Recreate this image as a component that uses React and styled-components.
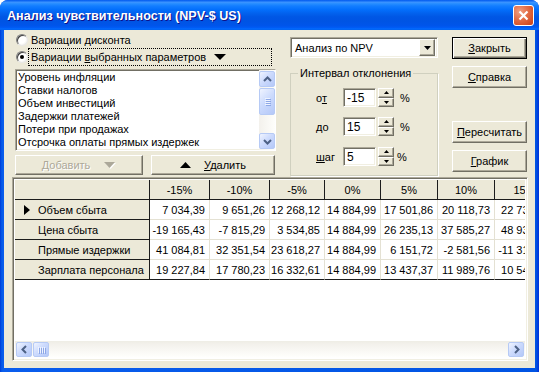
import React from "react";
import styled, { createGlobalStyle, css } from "styled-components";

const GlobalStyle = createGlobalStyle`
  html, body { margin: 0; padding: 0; }
  body {
    background: #ffffff;
    font-family: "Liberation Sans", Arial, sans-serif;
    font-size: 11px;
    color: #000;
  }
  * { box-sizing: border-box; }
`;

const raised = css`
  border: 1px solid;
  border-color: #fff #716f64 #716f64 #fff;
  box-shadow: inset -1px -1px 0 #aca899;
  background: #ece9d8;
`;

const sunken = css`
  border: 1px solid;
  border-color: #aca899 #fff #fff #aca899;
  box-shadow: inset 1px 1px 0 #716f64, inset -1px -1px 0 #f1efe2;
`;

const Window = styled.div`
  width: 539px;
  height: 372px;
  display: flex;
  flex-direction: column;
  background: linear-gradient(to right, #0030d8 0, #0054e3 1px, #0a5ded 3px, #0054e3 calc(100% - 3px), #0030d8 100%);
  border-radius: 8px 8px 0 0;
  overflow: hidden;
`;

const TitleBar = styled.div`
  flex: none;
  height: 30px;
  display: flex;
  align-items: center;
  justify-content: space-between;
  padding: 0 5px 0 7px;
  background: linear-gradient(
    to bottom,
    #0058ee 0%,
    #3a93ff 8%,
    #288eff 12%,
    #127dff 20%,
    #036ffc 32%,
    #0262ee 44%,
    #0057e5 56%,
    #0054e3 70%,
    #0055eb 86%,
    #005bf5 92%,
    #026afe 96%,
    #0062ef 100%
  );
`;

const Title = styled.div`
  color: #fff;
  font-weight: bold;
  font-size: 12.6px;
  text-shadow: 1px 1px 0 #0f1089;
  margin-top: 1px;
`;

const CloseButton = styled.div`
  width: 21px;
  height: 21px;
  border: 1px solid #fff;
  border-radius: 3px;
  background: radial-gradient(circle at 30% 30%, #f0a083 0%, #e4714b 40%, #d65228 75%, #c4401a 100%);
  display: flex;
  align-items: center;
  justify-content: center;
`;

const Client = styled.div`
  flex: 1;
  margin: 0 4px 4px;
  background: #ece9d8;
  display: flex;
  flex-direction: column;
  padding: 0 7px 7px 8px;
`;

const TopSection = styled.div`
  flex: none;
  height: 147px;
  display: flex;
  padding-left: 3px;
`;

const LeftCol = styled.div`
  width: 261px;
  display: flex;
  flex-direction: column;
  padding-top: 1px;
`;

const MidCol = styled.div`
  width: 148px;
  margin-left: 14px;
  display: flex;
  flex-direction: column;
  padding-top: 7px;
`;

const RightCol = styled.div`
  width: 75px;
  margin-left: 14px;
  display: flex;
  flex-direction: column;
  padding-top: 7px;
`;

const RadioRow = styled.div`
  height: 17px;
  display: flex;
  align-items: center;
  padding-left: 1px;
  padding-right: 4px;
`;

const RadioCircle = styled.div`
  width: 12px;
  height: 12px;
  border-radius: 50%;
  flex: none;
  border: 1px solid;
  border-color: #808080 #e8e8e8 #e8e8e8 #808080;
  background: radial-gradient(circle at 40% 40%, #fff 50%, #e6e4da 100%);
  box-shadow: inset 1px 1px 0 #404040;
  display: flex;
  align-items: center;
  justify-content: center;
  &::after {
    content: "";
    width: 4px;
    height: 4px;
    border-radius: 50%;
    background: ${(p) => (p.$checked ? "#000" : "transparent")};
  }
`;

const RadioLabel = styled.div`
  flex: 1;
  height: 18px;
  display: flex;
  align-items: center;
  gap: 8px;
  padding-left: 2px;
  border: 1px dotted ${(p) => (p.$focused ? "#000" : "transparent")};
`;

const U = styled.span`
  text-decoration: underline;
`;

const ListBox = styled.div`
  margin-top: 4px;
  height: 82px;
  ${sunken};
  background: #fff;
  display: flex;
`;

const ListItems = styled.div`
  flex: 1;
  padding: 1px 0 0 2px;
  line-height: 13px;
  white-space: nowrap;
  overflow: hidden;
`;

const VScroll = styled.div`
  width: 16px;
  padding: 1px 0;
  display: flex;
  flex-direction: column;
  background: linear-gradient(to right, #f3f1ec, #fefefb);
`;

const ScrollButton = styled.div`
  width: ${(p) => p.$w}px;
  height: ${(p) => p.$h}px;
  flex: none;
  border: 1px solid #b6caf5;
  border-radius: 2px;
  background: linear-gradient(135deg, #f0f4ff 0%, #cddbfd 45%, #b4c8f8 100%);
  display: flex;
  flex-direction: ${(p) => (p.$vertical ? "column" : "row")};
  align-items: center;
  justify-content: center;
  gap: 1px;
`;

const Grip = styled.div`
  width: ${(p) => (p.$vertical ? "5px" : "1px")};
  height: ${(p) => (p.$vertical ? "1px" : "6px")};
  background: #eef3ff;
  box-shadow: 1px 1px 0 #8ea8e6;
`;

const Spacer = styled.div`
  flex: 1;
`;

const ButtonRow = styled.div`
  margin-top: 4px;
  display: flex;
  gap: 8px;
  padding-right: 1px;
`;

const Button = styled.div`
  height: ${(p) => p.$h || 22}px;
  width: ${(p) => (p.$w ? `${p.$w}px` : "auto")};
  flex: ${(p) => (p.$grow ? 1 : "none")};
  margin-top: ${(p) => p.$mt || 0}px;
  display: flex;
  align-items: center;
  justify-content: center;
  gap: ${(p) => p.$gap || 0}px;
  color: ${(p) => (p.$disabled ? "#aca899" : "#000")};
  text-shadow: ${(p) => (p.$disabled ? "1px 1px 0 #fff" : "none")};
  ${raised};
  ${(p) =>
    p.$default &&
    css`
      border: 1px solid #000;
      box-shadow: inset 1px 1px 0 #fff, inset -1px -1px 0 #716f64, inset -2px -2px 0 #aca899;
    `}
`;

const Combo = styled.div`
  height: 21px;
  ${sunken};
  background: #fff;
  display: flex;
  align-items: center;
  padding: 2px 2px 2px 4px;
`;

const ComboText = styled.div`
  flex: 1;
`;

const ComboArrow = styled.div`
  width: 16px;
  height: 17px;
  ${raised};
  display: flex;
  align-items: center;
  justify-content: center;
`;

const GroupBox = styled.fieldset`
  margin: 9px 0 0;
  min-width: 0;
  height: 109px;
  border: 1px solid #d0d0bf;
  box-shadow: 1px 1px 0 #fff;
  padding: 8px 0 0 25px;
  display: flex;
  flex-direction: column;
  gap: 10px;
`;

const Legend = styled.legend`
  margin-left: -18px;
  padding: 0 2px;
  line-height: 13px;
  white-space: nowrap;
`;

const FieldRow = styled.div`
  height: 19px;
  display: flex;
  align-items: center;
  margin-top: ${(p) => p.$mt || 0}px;
`;

const FieldLabel = styled.div`
  width: 27px;
  padding-top: 1px;
`;

const Edit = styled.div`
  width: 33px;
  height: 19px;
  ${sunken};
  background: #fff;
  padding: 2px 3px;
  font-size: 12px;
  line-height: 14px;
`;

const Spin = styled.div`
  width: 16px;
  height: 19px;
  margin-left: 2px;
  display: flex;
  flex-direction: column;
`;

const SpinButton = styled.div`
  flex: 1;
  ${raised};
  display: flex;
  align-items: center;
  justify-content: center;
`;

const Percent = styled.div`
  margin-left: ${(p) => p.$gap}px;
`;

const Grid = styled.div`
  flex: 1;
  ${sunken};
  background: #fff;
  display: flex;
  flex-direction: column;
  padding: 2px;
`;

const TableArea = styled.div`
  flex: 1;
  overflow: hidden;
`;

const Table = styled.div`
  display: grid;
  grid-template-columns: 135px 60px 60px 55px 56px 57px 57px 60px;
  grid-auto-rows: 20px;
  width: max-content;
`;

const Cell = styled.div`
  border-right: 1px solid ${(p) => (p.$fixed ? "#1c1c1c" : "#e4e1d3")};
  border-bottom: 1px solid ${(p) => (p.$fixed || p.$last ? "#1c1c1c" : "#e4e1d3")};
  background: ${(p) => (p.$fixed ? "#ece9d8" : "#fff")};
  display: flex;
  align-items: center;
  justify-content: ${(p) => p.$justify || "flex-end"};
  padding: ${(p) => p.$pad || "0 4px 0 0"};
  white-space: nowrap;
`;

const Indicator = styled.div`
  width: 14px;
  flex: none;
  display: flex;
  align-items: center;
`;

const HScroll = styled.div`
  height: 17px;
  flex: none;
  display: flex;
  align-items: center;
  padding: 1px 1px;
  background: linear-gradient(to bottom, #eeede5, #f3f1ec 20%, #fefefb 90%, #fff);
`;

function Tri({ dir = "down", w = 11, h = 6, color = "#000", shadow }) {
  const pts =
    dir === "down"
      ? `0,0 ${w},0 ${w / 2},${h}`
      : dir === "up"
      ? `0,${h} ${w},${h} ${w / 2},0`
      : `0,0 ${w},${h / 2} 0,${h}`;
  return (
    <svg width={w + (shadow ? 1 : 0)} height={h + (shadow ? 1 : 0)} style={{ display: "block" }}>
      {shadow && <polygon points={pts} fill={shadow} transform="translate(1,1)" />}
      <polygon points={pts} fill={color} />
    </svg>
  );
}

function Chevron({ dir }) {
  const pts = {
    up: "2,7 5.5,3.5 9,7",
    down: "2,4 5.5,7.5 9,4",
    left: "7,2 3.5,5.5 7,9",
    right: "4,2 7.5,5.5 4,9",
  }[dir];
  return (
    <svg width="11" height="11" style={{ display: "block" }}>
      <polyline points={pts} fill="none" stroke="#4d6185" strokeWidth="2" />
    </svg>
  );
}

const params = [
  "Уровень инфляции",
  "Ставки налогов",
  "Объем инвестиций",
  "Задержки платежей",
  "Потери при продажах",
  "Отсрочка оплаты прямых издержек",
];

const headers = ["-15%", "-10%", "-5%", "0%", "5%", "10%", "15%"];

const rows = [
  { name: "Объем сбыта", current: true, values: ["7 034,39", "9 651,26", "12 268,12", "14 884,99", "17 501,86", "20 118,73", "22 735,60"] },
  { name: "Цена сбыта", values: ["-19 165,43", "-7 815,29", "3 534,85", "14 884,99", "26 235,13", "37 585,27", "48 935,41"] },
  { name: "Прямые издержки", values: ["41 084,81", "32 351,54", "23 618,27", "14 884,99", "6 151,72", "-2 581,56", "-11 314,82"] },
  { name: "Зарплата персонала", values: ["19 227,84", "17 780,23", "16 332,61", "14 884,99", "13 437,37", "11 989,76", "10 542,16"] },
];

const fields = [
  { label: <>о<U>т</U></>, value: "-15", gap: 6, mt: 0 },
  { label: <><U>д</U>о</>, value: "15", gap: 6, mt: 0 },
  { label: <><U>ш</U>аг</>, value: "5", gap: 3, mt: 1 },
];

export default function App() {
  return (
    <>
      <GlobalStyle />
      <Window>
        <TitleBar>
          <Title>Анализ чувствительности (NPV-$ US)</Title>
          <CloseButton>
            <svg width="11" height="11">
              <path d="M1.5 1.5 L9.5 9.5 M9.5 1.5 L1.5 9.5" stroke="#fff" strokeWidth="2.2" />
            </svg>
          </CloseButton>
        </TitleBar>
        <Client>
          <TopSection>
            <LeftCol>
              <RadioRow>
                <RadioCircle />
                <RadioLabel>
                  <span>
                    Вариации <U>д</U>исконта
                  </span>
                </RadioLabel>
              </RadioRow>
              <RadioRow>
                <RadioCircle $checked />
                <RadioLabel $focused>
                  <span>
                    Вариации <U>в</U>ыбранных параметров
                  </span>
                  <Tri dir="down" w={12} h={6} />
                </RadioLabel>
              </RadioRow>
              <ListBox>
                <ListItems>
                  {params.map((p) => (
                    <div key={p}>{p}</div>
                  ))}
                </ListItems>
                <VScroll>
                  <ScrollButton $w={16} $h={16}>
                    <Chevron dir="up" />
                  </ScrollButton>
                  <ScrollButton $w={16} $h={27} $vertical style={{ marginTop: 1 }}>
                    <Grip $vertical />
                    <Grip $vertical />
                    <Grip $vertical />
                    <Grip $vertical />
                  </ScrollButton>
                  <Spacer />
                  <ScrollButton $w={16} $h={16}>
                    <Chevron dir="down" />
                  </ScrollButton>
                </VScroll>
              </ListBox>
              <ButtonRow>
                <Button $w={128} $h={20} $gap={14} $disabled>
                  <span>
                    <U>Д</U>обавить
                  </span>
                  <Tri dir="down" w={11} h={6} color="#aca899" shadow="#fff" />
                </Button>
                <Button $grow $h={20} $gap={13}>
                  <Tri dir="up" w={11} h={6} />
                  <span>
                    <U>У</U>далить
                  </span>
                </Button>
              </ButtonRow>
            </LeftCol>

            <MidCol>
              <Combo>
                <ComboText>Анализ по NPV</ComboText>
                <ComboArrow>
                  <Tri dir="down" w={7} h={4} />
                </ComboArrow>
              </Combo>
              <GroupBox>
                <Legend>Интервал отклонения</Legend>
                {fields.map((f, i) => (
                  <FieldRow key={i} $mt={f.mt}>
                    <FieldLabel>{f.label}</FieldLabel>
                    <Edit>{f.value}</Edit>
                    <Spin>
                      <SpinButton>
                        <Tri dir="up" w={5} h={3} />
                      </SpinButton>
                      <SpinButton>
                        <Tri dir="down" w={5} h={3} />
                      </SpinButton>
                    </Spin>
                    <Percent $gap={f.gap}>%</Percent>
                  </FieldRow>
                ))}
              </GroupBox>
            </MidCol>

            <RightCol>
              <Button $default>
                <span>
                  <U>З</U>акрыть
                </span>
              </Button>
              <Button $mt={7}>
                <span>
                  <U>С</U>правка
                </span>
              </Button>
              <Button $mt={33}>
                <span>
                  <U>П</U>ересчитать
                </span>
              </Button>
              <Button $mt={7}>
                <span>
                  <U>Г</U>рафик
                </span>
              </Button>
            </RightCol>
          </TopSection>

          <Grid>
            <TableArea>
              <Table>
                <Cell $fixed />
                {headers.map((h) => (
                  <Cell key={h} $fixed $justify="center" $pad="0">
                    {h}
                  </Cell>
                ))}
                {rows.map((r, ri) => (
                  <React.Fragment key={r.name}>
                    <Cell $fixed $justify="flex-start" $pad="0 0 0 9px">
                      <Indicator>{r.current && <Tri dir="right" w={6} h={10} />}</Indicator>
                      {r.name}
                    </Cell>
                    {r.values.map((v, vi) => (
                      <Cell key={vi} $last={ri === rows.length - 1}>
                        {v}
                      </Cell>
                    ))}
                  </React.Fragment>
                ))}
              </Table>
            </TableArea>
            <HScroll>
              <ScrollButton $w={16} $h={15}>
                <Chevron dir="left" />
              </ScrollButton>
              <ScrollButton $w={16} $h={15} style={{ marginLeft: 1 }}>
                <Grip />
                <Grip />
                <Grip />
                <Grip />
              </ScrollButton>
              <Spacer />
              <ScrollButton $w={16} $h={15}>
                <Chevron dir="right" />
              </ScrollButton>
            </HScroll>
          </Grid>
        </Client>
      </Window>
    </>
  );
}
